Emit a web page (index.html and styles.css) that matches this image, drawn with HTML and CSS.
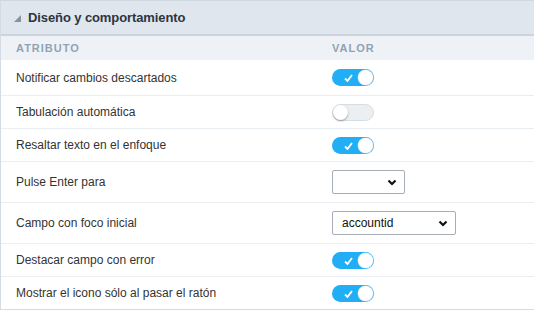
FILE: index.html
```html
<!DOCTYPE html>
<html lang="es">
<head>
<meta charset="utf-8">
<link rel="stylesheet" href="styles.css">
</head>
<body>
<div class="panel">
  <div class="panel-head">
    <svg class="tri" width="7" height="7" viewBox="0 0 7 7"><polygon points="7,0 7,7 0,7" fill="#8a939c"/></svg>
    <span class="title">Diseño y comportamiento</span>
  </div>
  <div class="cols">
    <div class="c1">ATRIBUTO</div>
    <div class="c2">VALOR</div>
  </div>
  <div class="row first">
    <div class="c1">Notificar cambios descartados</div>
    <div class="c2"><span class="tg on"><svg class="chk" width="9" height="8" viewBox="0 0 9 8"><polyline points="1,4.5 3.5,7 8,1" fill="none" stroke="#fff" stroke-width="1.8"/></svg><span class="knob"></span></span></div>
  </div>
  <div class="row">
    <div class="c1">Tabulación automática</div>
    <div class="c2"><span class="tg off"><span class="knob"></span></span></div>
  </div>
  <div class="row">
    <div class="c1">Resaltar texto en el enfoque</div>
    <div class="c2"><span class="tg on"><svg class="chk" width="9" height="8" viewBox="0 0 9 8"><polyline points="1,4.5 3.5,7 8,1" fill="none" stroke="#fff" stroke-width="1.8"/></svg><span class="knob"></span></span></div>
  </div>
  <div class="row tall">
    <div class="c1">Pulse Enter para</div>
    <div class="c2"><div class="sel small"><span class="val"></span><svg width="10" height="7" viewBox="0 0 10 7"><polyline points="1.5,1.5 5,5 8.5,1.5" fill="none" stroke="#111" stroke-width="2.2"/></svg></div></div>
  </div>
  <div class="row tall">
    <div class="c1">Campo con foco inicial</div>
    <div class="c2"><div class="sel wide"><span class="val">accountid</span><svg width="10" height="7" viewBox="0 0 10 7"><polyline points="1.5,1.5 5,5 8.5,1.5" fill="none" stroke="#111" stroke-width="2.2"/></svg></div></div>
  </div>
  <div class="row">
    <div class="c1">Destacar campo con error</div>
    <div class="c2"><span class="tg on"><svg class="chk" width="9" height="8" viewBox="0 0 9 8"><polyline points="1,4.5 3.5,7 8,1" fill="none" stroke="#fff" stroke-width="1.8"/></svg><span class="knob"></span></span></div>
  </div>
  <div class="row last">
    <div class="c1">Mostrar el icono sólo al pasar el ratón</div>
    <div class="c2"><span class="tg on"><svg class="chk" width="9" height="8" viewBox="0 0 9 8"><polyline points="1,4.5 3.5,7 8,1" fill="none" stroke="#fff" stroke-width="1.8"/></svg><span class="knob"></span></span></div>
  </div>
</div>
</body>
</html>
```
FILE: styles.css
```css
* { box-sizing: border-box; }
html, body { margin: 0; padding: 0; background: #fff; }
body { font-family: "Liberation Sans", Arial, sans-serif; color: #333; }
.panel {
  width: 534px;
  height: 310px;
  border-left: 1px solid #d3dce5;
  border-bottom: 1px solid #d3dce5;
  overflow: hidden;
}
.panel-head {
  height: 36px;
  background: #dfe6ee;
  border-top: 1px solid #cfd8e0;
  border-bottom: 2px solid #ccd5dd;
  display: flex;
  align-items: center;
  padding-left: 13px;
  gap: 7px;
}
.tri { margin-top: 1px; }
.title { font-size: 13px; font-weight: bold; color: #2e3540; letter-spacing: -0.1px; }
.cols {
  height: 24px;
  background: #eef2f6;
  display: flex;
  align-items: center;
  font-size: 11px;
  font-weight: bold;
  color: #8fa3b5;
  letter-spacing: 1px;
}
.c1 { width: 331px; padding-left: 15px; }
.c2 { flex: 1; display: flex; align-items: center; }
.row {
  height: 33px;
  display: flex;
  align-items: center;
  border-bottom: 1px solid #e9eef3;
  font-size: 12px;
  color: #333;
}
.row.first { height: 36px; }
.row.tall { height: 41px; }
.row.last { border-bottom: none; height: 32px; }
.tg {
  position: relative;
  display: inline-block;
  width: 42px;
  height: 17px;
  border-radius: 9px;
}
.tg.on { background: #22aef5; }
.tg.off { background: #eceff2; border: 1px solid #d6dde3; }
.knob {
  position: absolute;
  top: 1px;
  width: 15px;
  height: 15px;
  border-radius: 50%;
  background: #fff;
}
.tg.on .knob { right: 1px; box-shadow: 0 0 0 0.5px #9fd8f7; }
.tg.off .knob { left: 0; top: 0; box-shadow: 0 1px 2px rgba(0,0,0,0.35); }
.chk { position: absolute; left: 12px; top: 5px; }
.sel {
  height: 24px;
  border: 1px solid #a7adb4;
  border-radius: 2px;
  background: #fff;
  display: flex;
  align-items: center;
  justify-content: space-between;
  padding: 0 7px 0 9px;
  font-size: 12px;
  color: #111;
}
.sel.small { width: 73px; }
.sel.wide { width: 124px; }
```
